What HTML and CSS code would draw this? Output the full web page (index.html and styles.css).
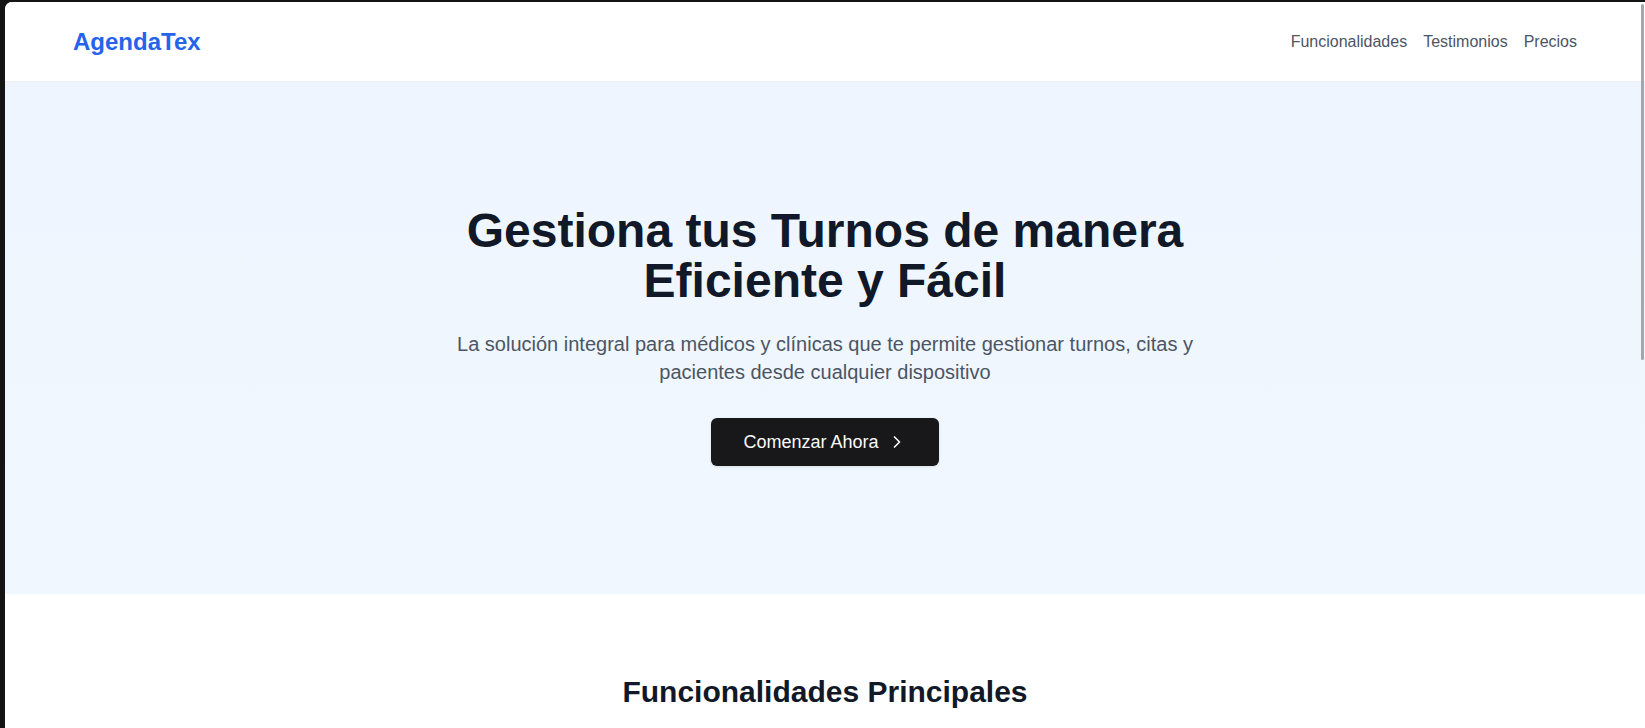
FILE: index.html
```html
<!DOCTYPE html>
<html lang="es">
<head>
<meta charset="utf-8">
<title>AgendaTex</title>
<link rel="stylesheet" href="styles.css">
</head>
<body>
<div class="window">
  <header class="site-header">
    <div class="container header-inner">
      <a class="logo" href="#">AgendaTex</a>
      <nav class="nav">
        <a href="#">Funcionalidades</a>
        <a href="#">Testimonios</a>
        <a href="#">Precios</a>
      </nav>
    </div>
  </header>
  <section class="hero">
    <div class="container hero-inner">
      <h1 class="hero-title">Gestiona tus Turnos de manera<br>Eficiente y Fácil</h1>
      <p class="hero-sub">La solución integral para médicos y clínicas que te permite gestionar turnos, citas y pacientes desde cualquier dispositivo</p>
      <a class="btn" href="#">Comenzar Ahora
        <svg class="btn-icon" viewBox="0 0 24 24" fill="none" stroke="currentColor" stroke-width="2" stroke-linecap="round" stroke-linejoin="round"><path d="m9 18 6-6-6-6"/></svg>
      </a>
    </div>
  </section>
  <section class="features">
    <div class="container">
      <h2 class="section-title">Funcionalidades Principales</h2>
    </div>
  </section>
  <div class="scroll-thumb"></div>
</div>
</body>
</html>
```
FILE: styles.css
```css
html, body {
  margin: 0;
  height: 728px;
  overflow: hidden;
  background: #141414;
}
body {
  padding: 2px 0 0 5px;
  box-sizing: border-box;
  font-family: "Liberation Sans", Arial, sans-serif;
}
.window {
  position: relative;
  width: 1640px;
  height: 726px;
  background: #ffffff;
  border-top-left-radius: 7px;
  overflow: hidden;
}
.container {
  box-sizing: border-box;
  max-width: 1536px;
  margin: 0 auto;
  padding: 0 16px;
}
.site-header {
  background: #ffffff;
  border-bottom: 1px solid #edf0f4;
}
.header-inner {
  display: flex;
  align-items: center;
  justify-content: space-between;
  padding-top: 24px;
  padding-bottom: 23px;
}
.logo {
  font-size: 24px;
  line-height: 32px;
  font-weight: 700;
  color: #2563eb;
  text-decoration: none;
}
.nav {
  display: flex;
  gap: 16px;
}
.nav a {
  font-size: 16px;
  line-height: 24px;
  color: #4b5563;
  text-decoration: none;
}
.hero {
  background: linear-gradient(180deg, #eef5fe 0%, #f1f7fe 100%);
  padding: 124px 0 128px;
  box-shadow: 0 1px 2px rgba(0, 0, 0, 0.03);
}
.hero-inner {
  display: flex;
  flex-direction: column;
  align-items: center;
  text-align: center;
}
.hero-title {
  margin: 0 0 24px;
  font-size: 48px;
  line-height: 50px;
  font-weight: 700;
  color: #111827;
}
.hero-sub {
  margin: 0 0 32px;
  max-width: 768px;
  font-size: 20px;
  line-height: 28px;
  color: #4b5563;
}
.btn {
  display: inline-flex;
  align-items: center;
  gap: 8px;
  height: 48px;
  box-sizing: border-box;
  padding: 0 32px;
  background: #18181b;
  color: #fafafa;
  border-radius: 6px;
  font-size: 18px;
  text-decoration: none;
  box-shadow: 0 1px 3px rgba(0, 0, 0, 0.1);
}
.btn-icon {
  width: 20px;
  height: 20px;
}
.features {
  padding: 80px 0;
  background: #ffffff;
}
.section-title {
  margin: 0;
  text-align: center;
  font-size: 30px;
  line-height: 36px;
  font-weight: 700;
  color: #111827;
}
.scroll-thumb {
  position: absolute;
  top: 2px;
  right: 1px;
  width: 3px;
  height: 356px;
  border-radius: 2px;
  background: #a3a6ab;
}
```
